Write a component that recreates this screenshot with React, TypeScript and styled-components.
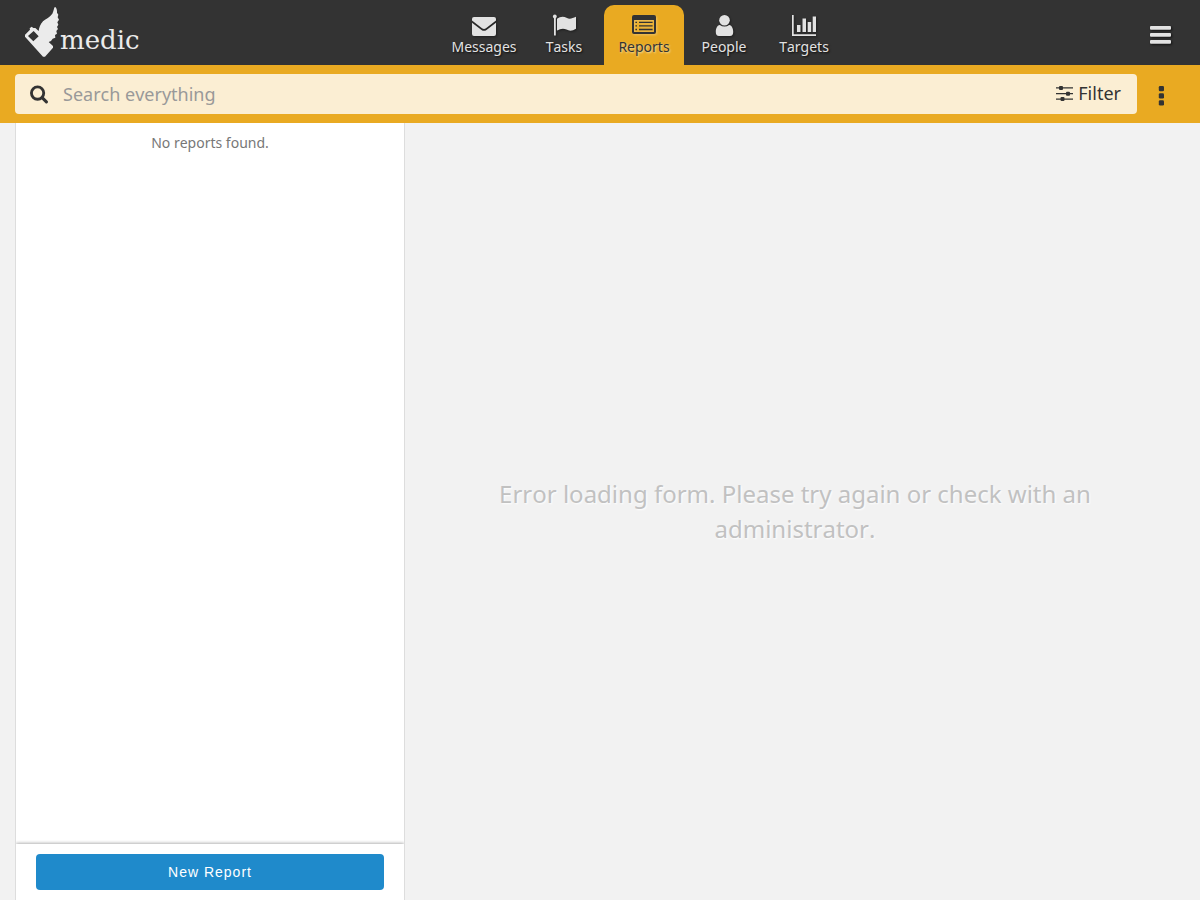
import React from "react";
import styled, { createGlobalStyle, css } from "styled-components";

const amber = "#e9aa22";
const dark = "#333333";
const light = "#e2e2e2";

const GlobalStyle = createGlobalStyle`
  *, *::before, *::after { box-sizing: border-box; }
  body {
    margin: 0;
    background: #f2f2f2;
    color: ${dark};
    font-family: "Noto Sans", sans-serif;
    font-size: 14px;
    line-height: 20px;
    font-kerning: none;
  }
  button, input { font: inherit; font-kerning: none; }
`;

const Page = styled.div`
  display: flex;
  flex-direction: column;
  min-height: 100vh;
`;

const Header = styled.header`
  display: flex;
  height: 65px;
  background: ${dark};
`;

const LogoLink = styled.a`
  display: flex;
  width: 168px;
  padding: 2px 0 0 20px;
  color: #ebebeb;
  text-decoration: none;
`;

const LogoText = styled.span`
  padding-top: 20px;
  font-family: "DejaVu Serif", serif;
  font-size: 26px;
  line-height: 36px;
`;

const Tabs = styled.nav`
  display: flex;
  flex: 1;
  justify-content: center;
  align-items: flex-end;
`;

const Tab = styled.a<{ $active?: boolean }>`
  display: flex;
  flex-direction: column;
  align-items: center;
  width: 80px;
  height: 60px;
  padding-top: 9px;
  border-radius: 10px 10px 0 0;
  color: ${light};
  text-decoration: none;
  text-shadow: 1px 1px 2px rgba(0, 0, 0, 0.8);
  svg { filter: drop-shadow(1px 1px 1px rgba(0, 0, 0, 0.4)); }
  ${({ $active }) =>
    $active &&
    css`
      background: ${amber};
      color: ${dark};
      text-shadow: 1px 1px 2px rgba(255, 255, 255, 0.6);
      svg { filter: drop-shadow(1px 1px 1px rgba(255, 255, 255, 0.3)); }
    `}
`;

const TabLabel = styled.span`
  line-height: 20px;
`;

const IconButton = styled.button`
  display: flex;
  align-items: center;
  justify-content: center;
  padding: 0;
  border: 0;
  background: none;
  cursor: pointer;
`;

const MenuButton = styled(IconButton)`
  width: 80px;
  padding-top: 5px;
  color: ${light};
  svg { filter: drop-shadow(1px 1px 1px rgba(0, 0, 0, 0.7)); }
`;

const Toolbar = styled.div`
  display: flex;
  align-items: center;
  height: 58px;
  padding: 0 15px;
  background: ${amber};
`;

const SearchBox = styled.form`
  display: flex;
  flex: 1;
  align-items: center;
  height: 40px;
  padding: 0 15px;
  border-radius: 4px;
  background: #fbeed3;
  font-size: 18px;
`;

const SearchButton = styled(IconButton)`
  width: 18px;
  color: ${dark};
`;

const SearchInput = styled.input`
  flex: 1;
  min-width: 0;
  height: 40px;
  padding: 0 15px;
  border: 0;
  outline: 0;
  background: transparent;
  color: ${dark};
  &::placeholder { color: #999999; opacity: 1; }
`;

const FilterButton = styled(IconButton)`
  gap: 4px;
  padding: 0 1px 2px 0;
  color: ${dark};
  line-height: 24px;
`;

const MoreButton = styled(IconButton)`
  width: 48px;
  height: 40px;
  padding-top: 4px;
  color: ${dark};
`;

const Main = styled.main`
  display: flex;
  flex: 1;
  padding: 0 15px;
`;

const ListPane = styled.section`
  display: flex;
  flex-direction: column;
  flex: 0 0 390px;
  border: solid #dddddd;
  border-width: 0 1px;
  background: #ffffff;
`;

const EmptyList = styled.p`
  flex: 1;
  margin: 0;
  padding: 10px;
  color: #777777;
  text-align: center;
`;

const ListActions = styled.div`
  padding: 10px 20px;
  box-shadow: 0 -1px 3px rgba(0, 0, 0, 0.3);
  clip-path: inset(-4px 0 0 0);
`;

const PrimaryButton = styled.button`
  display: block;
  width: 100%;
  height: 36px;
  padding: 0;
  border: 0;
  border-radius: 4px;
  background: #1f8acb;
  color: #ffffff;
  font-family: "Liberation Sans", Arial, sans-serif;
  font-size: 14px;
  letter-spacing: 1px;
  cursor: pointer;
`;

const ContentPane = styled.section`
  display: flex;
  flex: 1;
  align-items: center;
  justify-content: center;
  padding: 0 30px 2px;
`;

const ErrorMessage = styled.p`
  margin: 0;
  color: #c1c1c1;
  font-size: 24px;
  line-height: 35px;
  text-align: center;
  text-shadow: 1px 1px 2px #ffffff;
`;

const LogoMark = () => (
  <svg width="40" height="60" viewBox="0 0 120 180" fill="currentColor" aria-hidden="true">
    <path
      fillRule="evenodd"
      d="M15 98 L30 83 L29 79 L35 74 L40 78 L46 78 L56 87 C57 77 61 67 69 58 C78 50 90 46 97 35 C101 28 101 18 105 14 C111 19 111 25 111 32 L115 38 L113 46 L117 53 L112 61 L115 68 L111 75 L114 81 L109 87 L111 95 L105 99 L106 107 L98 110 L93 117 L86 120 L99 132 L99 137 L75 164 L69 164 L15 104 Z M24 102 L40 118 L56 103 L41 87 Z"
    />
  </svg>
);

const EnvelopeIcon = () => (
  <svg width="24" height="23" viewBox="0 0 24 23" fill="currentColor" aria-hidden="true">
    <path d="M2 3H22Q24 3 24 5V6.5L14 14.2Q12 15.7 10 14.2L0 6.500V5Q0 3 2 3Z" />
    <path d="M0 8.700L9.500 16Q12 17.700 14.500 16L24 8.700V20Q24 22 22 22H2Q0 22 0 20Z" />
  </svg>
);

const FlagIcon = () => (
  <svg width="24" height="23" viewBox="0 0 24 23" fill="currentColor" aria-hidden="true">
    <circle cx="2.800" cy="2.500" r="1.900" />
    <path d="M2 3H3.800V21.500H2Z" />
    <path d="M5 4.800C8 2.500 11.500 2 14.500 3.800C17.500 5.400 20 4.600 24 2.800V14.800C20.500 17 17.500 17.300 14.500 15.600C11 13.900 8 15 5 16.600Z" />
  </svg>
);

const ReportsIcon = () => (
  <svg width="24" height="23" viewBox="0 0 24 23" fill="currentColor" aria-hidden="true">
    <path
      fillRule="evenodd"
      d="M2 1H22Q24 1 24 3V18Q24 20 22 20H2Q0 20 0 18V3Q0 1 2 1ZM2.500 6Q2 6 2 6.500V17.500Q2 18 2.500 18H21.500Q22 18 22 17.500V6.500Q22 6 21.500 6Z"
    />
    <path d="M3.400 7.700H5V9.100H3.400ZM7 7.700H20.600V9.100H7ZM3.400 11.200H5V12.600H3.400ZM7 11.200H20.600V12.600H7ZM3.400 14.800H5V16.200H3.400ZM7 14.800H20.600V16.200H7Z" />
  </svg>
);

const PersonIcon = () => (
  <svg width="24" height="23" viewBox="0 0 24 23" fill="currentColor" aria-hidden="true">
    <circle cx="12.500" cy="6.200" r="5.300" />
    <path d="M7.800 11Q10 12.600 12.500 12.600T17.200 11C20 11.500 21.200 14.500 21.200 18Q21.200 22 18 22H7Q3.800 22 3.800 18C3.800 14.500 5 11.500 7.800 11Z" />
  </svg>
);

const TargetsIcon = () => (
  <svg width="24" height="23" viewBox="0 0 24 23" fill="currentColor" aria-hidden="true">
    <path d="M0 1H1.700V20.300H24V22H0ZM5 11H8.500V18H5ZM10.500 4.500H14V18H10.500ZM15.700 8H19.200V18H15.700ZM20.700 2.500H24V18H20.700Z" />
  </svg>
);

const BarsIcon = () => (
  <svg width="21" height="18" viewBox="0 0 21 18" fill="currentColor" aria-hidden="true">
    <rect width="21" height="3.700" rx="1" />
    <rect y="7" width="21" height="3.700" rx="1" />
    <rect y="14" width="21" height="3.700" rx="1" />
  </svg>
);

const SearchIcon = () => (
  <svg width="19" height="19" viewBox="0 0 19 19" fill="none" stroke="currentColor" aria-hidden="true">
    <circle cx="8" cy="8" r="6.500" strokeWidth="3" />
    <path d="M12.800 12.800L17.300 17.300" strokeWidth="3.200" strokeLinecap="round" />
  </svg>
);

const SlidersIcon = () => (
  <svg width="18" height="16" viewBox="0 0 18 16" fill="currentColor" aria-hidden="true">
    <path d="M0 2.300H17V3.500H0ZM0 8.100H17V9.300H0ZM0 13.500H17V14.700H0Z" />
    <rect x="3" y="0.900" width="4" height="4" rx="1" />
    <rect x="10" y="6.700" width="4" height="4" rx="1" />
    <rect x="4.500" y="12" width="4" height="4" rx="1" />
  </svg>
);

const MoreIcon = () => (
  <svg width="6" height="20" viewBox="0 0 6 20" fill="currentColor" aria-hidden="true">
    <rect x="0.800" width="5.200" height="5.300" rx="1.300" />
    <rect x="0.800" y="7.200" width="5.200" height="5.300" rx="1.300" />
    <rect x="0.800" y="14.300" width="5.200" height="5.300" rx="1.300" />
  </svg>
);

const tabs = [
  { label: "Messages", Icon: EnvelopeIcon },
  { label: "Tasks", Icon: FlagIcon },
  { label: "Reports", Icon: ReportsIcon, active: true },
  { label: "People", Icon: PersonIcon },
  { label: "Targets", Icon: TargetsIcon },
];

export default function App() {
  return (
    <>
      <GlobalStyle />
      <Page>
        <Header>
          <LogoLink href="#home">
            <LogoMark />
            <LogoText>medic</LogoText>
          </LogoLink>
          <Tabs>
            {tabs.map(({ label, Icon, active }) => (
              <Tab
                key={label}
                href={`#${label.toLowerCase()}`}
                $active={active}
                aria-current={active ? "page" : undefined}
              >
                <Icon />
                <TabLabel>{label}</TabLabel>
              </Tab>
            ))}
          </Tabs>
          <MenuButton type="button" aria-label="Menu">
            <BarsIcon />
          </MenuButton>
        </Header>
        <Toolbar>
          <SearchBox role="search" onSubmit={(event) => event.preventDefault()}>
            <SearchButton type="submit" aria-label="Search">
              <SearchIcon />
            </SearchButton>
            <SearchInput type="text" placeholder="Search everything" aria-label="Search everything" />
            <FilterButton type="button">
              <SlidersIcon />
              Filter
            </FilterButton>
          </SearchBox>
          <MoreButton type="button" aria-label="More options">
            <MoreIcon />
          </MoreButton>
        </Toolbar>
        <Main>
          <ListPane>
            <EmptyList>No reports found.</EmptyList>
            <ListActions>
              <PrimaryButton type="button">New Report</PrimaryButton>
            </ListActions>
          </ListPane>
          <ContentPane>
            <ErrorMessage>
              Error loading form. Please try again or check with an administrator.
            </ErrorMessage>
          </ContentPane>
        </Main>
      </Page>
    </>
  );
}
